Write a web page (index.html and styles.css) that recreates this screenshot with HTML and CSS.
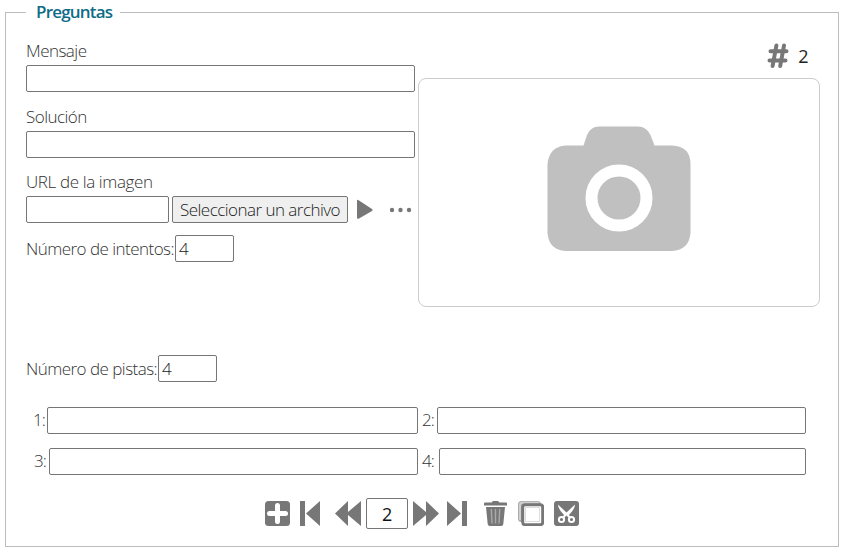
FILE: index.html
```html
<!DOCTYPE html>
<html lang="es">
<head>
<meta charset="utf-8">
<title>Preguntas</title>
<link rel="stylesheet" href="styles.css">
</head>
<body>
<fieldset class="panel">
  <legend>Preguntas</legend>
  <div class="question">
    <div class="fields">
      <label class="label" for="message">Mensaje</label>
      <input class="box" id="message" type="text">
      <label class="label" for="solution">Solución</label>
      <input class="box" id="solution" type="text">
      <label class="label t-url" for="url">URL de la imagen</label>
      <div class="url-row">
        <input class="box url" id="url" type="text">
        <button class="box file" type="button">Seleccionar un archivo</button>
        <svg class="play" width="20" height="22" viewBox="0 0 20 22"><path d="M3 1.500v17q0 2 2 1l13-7.500q1.500-1 0-2L5 1.500q-2-1.500-2 0z"/></svg>
        <svg class="more" width="24" height="8" viewBox="0 0 24 8"><circle cx="4" cy="4" r="2.200"/><circle cx="12.500" cy="4" r="2.200"/><circle cx="21" cy="4" r="2.200"/></svg>
      </div>
      <div class="number-row">
        <label class="t-tries" for="tries">Número de intentos:</label>
        <input class="box number" id="tries" type="text" value="4">
      </div>
    </div>
    <div class="media">
      <div class="counter">
        <svg width="22" height="27" viewBox="0 0 22 27"><path class="hash" d="M9.400 3.500 5.600 24M17 3.500l-3.800 20.500M3.500 9.300h16M2.500 18.600h16"/></svg>
        <span>2</span>
      </div>
      <div class="preview">
        <svg width="144" height="126" viewBox="0 0 144 126"><path class="camera" d="M18.500 19.500H36.500L40 9Q43.500.5 52 .5H91Q99.500.5 103.500 9L107.500 19.500H125Q143.500 20.500 143.500 38V107Q142 124 125 125H18.500Q2 124 .5 107V38Q2 21 18.500 19.500z"/><circle class="lens" cx="72" cy="72" r="27.500"/></svg>
      </div>
    </div>
  </div>
  <div class="number-row hints-count">
    <label class="t-hints" for="hints">Número de pistas:</label>
    <input class="box number" id="hints" type="text" value="4">
  </div>
  <div class="hints">
    <div class="hint"><label for="h1">1:</label><input class="box" id="h1" type="text"></div>
    <div class="hint"><label for="h2">2:</label><input class="box" id="h2" type="text"></div>
    <div class="hint wide"><label for="h3">3:</label><input class="box" id="h3" type="text"></div>
    <div class="hint wide"><label for="h4">4:</label><input class="box" id="h4" type="text"></div>
  </div>
  <div class="toolbar">
    <svg class="add" width="25" height="25" viewBox="0 0 25 25"><rect width="25" height="25" rx="3.500"/><path class="plus" d="M12.500 4.500v16M4.500 12.500h16"/></svg>
    <svg class="first" width="20" height="25" viewBox="0 0 20 25"><path d="M0 0h5v25H0zM20 0v25L6 12.500z"/></svg>
    <svg class="prev" width="26" height="25" viewBox="0 0 26 25"><path d="M13 0v11L26 0v25L13 14v11L0 12.500z"/></svg>
    <input class="box page" type="text" value="2" aria-label="Número de pregunta">
    <svg class="next" width="26" height="25" viewBox="0 0 26 25"><path d="M13 0v11L0 0v25l13-11v11L26 12.500z"/></svg>
    <svg class="last" width="20" height="25" viewBox="0 0 20 25"><path d="M15 0h5v25h-5zM0 0v25l14-12.500z"/></svg>
    <svg class="trash" width="23" height="25" viewBox="0 0 23 25"><path d="M0 2.500Q0 1.500 1 1.500H7.500L9 0h5l1.500 1.500H22q1 0 1 1V4.500H0zM2 6h19l-1.700 17q-.3 2-2 2H5.700q-1.700 0-2-2z"/><path class="ribs" d="m7.300 8 .7 14.500M11.500 8v14.500M15.700 8 15 22.500"/></svg>
    <svg class="copy" width="26" height="25" viewBox="0 0 26 25"><rect class="back" x="0" y="0" width="23" height="21" rx="3.500"/><path class="edge" d="M2 19V4Q2 1.800 5 1.800h16"/><rect class="front" x="4.700" y="3.700" width="20" height="20" rx="2.500"/><rect class="sheet" x="7.500" y="6.500" width="14" height="14"/></svg>
    <svg class="cut" width="25" height="25" viewBox="0 0 25 25"><rect width="25" height="25" rx="3"/><path class="blade" d="M4 3.500Q4 8 10 14l-1.500 2 1.500 1 2.500-2.500L15 17l1.500-1-1.500-2q6-6 6-10.500l-8.500 8z"/><circle class="ring" cx="7.500" cy="18.500" r="2.600"/><circle class="ring" cx="17.500" cy="18.500" r="2.600"/></svg>
  </div>
</fieldset>
</body>
</html>
```
FILE: styles.css
```css
* { box-sizing: border-box; }
body {
  margin: 0;
  background: #fff;
  color: #333;
  font: 300 17px/24px "Open Sans", "Noto Sans", sans-serif;
  letter-spacing: -0.53px;
}
svg { display: block; flex: none; fill: #777; }
.panel {
  margin: 0 4px 0 5px;
  height: 547px;
  min-width: 0;
  padding: 0 18px 0 20px;
  border: 1px solid #bcbcbc;
}
legend {
  width: 94px;
  height: 24px;
  padding: 0 0 0 10px;
  color: #0e6c86;
  font-weight: 550;
  letter-spacing: -0.8px;
  white-space: nowrap;
}
.question {
  display: grid;
  grid-template-columns: 389px 402px;
  column-gap: 3px;
  height: 283px;
}
.fields { display: flex; flex-direction: column; padding-top: 15px; }
.label { height: 26px; white-space: nowrap; }
.label:not(:first-child) { height: 39px; padding-top: 13px; }
.label.t-url:not(:first-child) { height: 38px; padding-top: 12px; letter-spacing: -0.38px; }
label { white-space: nowrap; }
.box {
  display: block;
  height: 27px;
  min-width: 0;
  border: 1px solid #767676;
  border-radius: 2px;
  padding: 0 3px;
  background: #fff;
  color: #222;
  font: inherit;
  letter-spacing: inherit;
  outline: 0;
}
.url-row { display: flex; align-items: center; }
.url { width: 143px; margin-right: 3px; }
.file { width: 176px; padding: 0; background: #efefef; color: #222; white-space: nowrap; }
.play { margin-left: 6px; }
.more { margin-left: 14px; }
.number-row { display: flex; align-items: center; }
.fields .number-row { margin-top: 12px; }
.number { width: 59px; }
.t-tries { width: 149px; }
.t-hints { width: 132px; }
.media { padding-top: 18px; }
.counter { display: flex; align-items: center; justify-content: flex-end; gap: 9px; height: 27px; padding-right: 12px; color: #222; font-size: 18px; font-weight: 400; }
.counter svg { height: 27px; }
.hash { fill: none; stroke: #777; stroke-width: 4; stroke-linecap: round; }
.preview {
  display: flex;
  justify-content: center;
  height: 229px;
  margin-top: 9px;
  padding-top: 47px;
  border: 1px solid #ccc;
  border-radius: 8px;
}
.camera { fill: #c0c0c0; }
.lens { fill: none; stroke: #fff; stroke-width: 12; }
.hints-count { margin-top: 48px; }
.hints {
  display: grid;
  grid-template-columns: 384px 384px;
  gap: 14px 4px;
  margin: 25px 0 0 8px;
}
.hint { display: grid; grid-template-columns: 15px 1fr; align-items: center; }
.hint label { margin-top: -1px; letter-spacing: -1px; }
.hint:first-child { grid-template-columns: 13px 1fr; }
.hint:first-child label { margin-left: -1px; }
.hint.wide { grid-template-columns: 17px 1fr; }
.hint:nth-child(3) { grid-template-columns: 15px 1fr; }
.toolbar { display: flex; align-items: center; margin: 23px 0 0 239px; }
.plus { fill: none; stroke: #fff; stroke-width: 5; stroke-linecap: round; }
.first { margin-left: 10px; }
.prev { margin-left: 15px; }
.page { width: 42px; height: 31px; margin: 0 5px; padding: 0; text-align: center; color: #111; font-size: 18px; font-weight: 400; }
.last { margin-left: 8px; }
.trash { margin-left: 17px; }
.ribs { fill: none; stroke: #aaa; stroke-width: 1.4; }
.copy { margin-left: 11px; }
.back { fill: #aaa; }
.edge { fill: none; stroke: #d0d0d0; stroke-width: 2; }
.front { fill: #fff; stroke: #777; stroke-width: 3; }
.sheet { fill: #fff; stroke: #ddd; }
.cut { margin-left: 10px; }
.blade { fill: #fff; }
.ring { fill: none; stroke: #fff; stroke-width: 2; }
```
